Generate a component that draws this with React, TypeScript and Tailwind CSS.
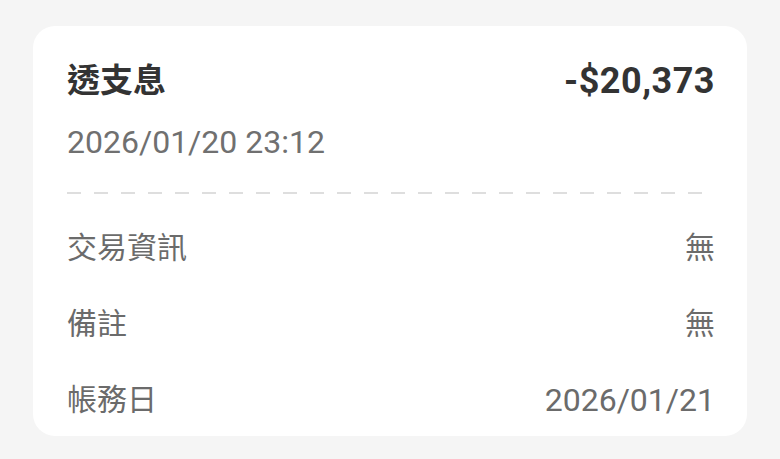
import React from 'react';

const font = { fontFamily: 'Roboto, "Noto Sans CJK TC", sans-serif' };

const TransactionCard: React.FC = () => {
  const rows = [
    { label: '交易資訊', value: '無' },
    { label: '備註', value: '無' },
    { label: '帳務日', value: '2026/01/21' },
  ];

  return (
    <div className="min-h-screen bg-[#f5f5f5] pt-[26px] px-[33px]" style={font}>
      <div className="bg-white rounded-[22px] pl-[34px] pr-[32px] pt-[35px] pb-[16px]">
        {/* Header */}
        <div className="flex items-center justify-between leading-[40px]">
          <span className="text-[33px] font-bold text-[#333333]">透支息</span>
          <span className="text-[36px] font-bold tracking-[0.5px] text-[#333333]">-$20,373</span>
        </div>
        <div className="mt-[21px] text-[32px] leading-[40px] text-[#707070]">2026/01/20 23:12</div>

        {/* Dashed divider */}
        <div className="mt-[30px] h-[2px] bg-[linear-gradient(to_right,#dedede_14px,transparent_14px)] bg-[length:27px_2px] bg-repeat-x" />

        {/* Detail rows */}
        <div className="mt-[34px] flex flex-col gap-[36px]">
          {rows.map((row) => (
            <div key={row.label} className="flex items-center justify-between leading-[40px] text-[#6b6b6b]">
              <span className="text-[30px]">{row.label}</span>
              <span className={row.value === '無' ? 'text-[30px]' : 'text-[32px]'}>{row.value}</span>
            </div>
          ))}
        </div>
      </div>
    </div>
  );
};

export default function App() {
  return <TransactionCard />;
}
